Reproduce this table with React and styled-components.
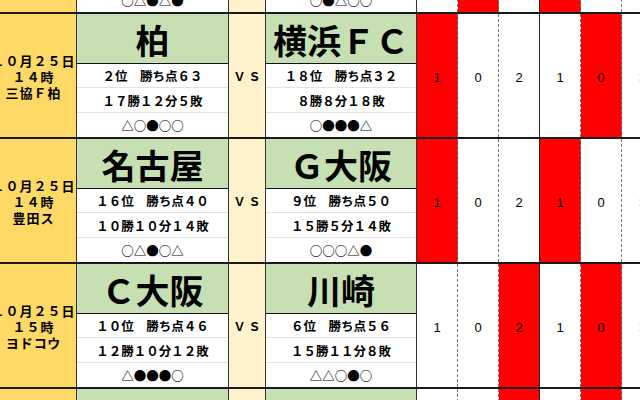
import React from 'react';
import styled, { createGlobalStyle } from 'styled-components';

//////////////////////////////////////////////////

const matches = [
  {
    date: ['', '', ''],
    home: { name: '', rank: '', record: '', form: '○△●△●' },
    away: { name: '', rank: '', record: '', form: '○●△○○' },
    results: [
      { v: '', red: false },
      { v: '', red: true },
      { v: '', red: false },
      { v: '', red: true },
      { v: '', red: false },
      { v: '', red: false },
    ],
  },
  {
    date: ['１０月２５日', '１４時', '三協Ｆ柏'],
    home: { name: '柏', rank: '２位　勝ち点６３', record: '１７勝１２分５敗', form: '△○●○○' },
    away: { name: '横浜ＦＣ', rank: '１８位　勝ち点３２', record: '８勝８分１８敗', form: '○●●●△' },
    results: [
      { v: '1', red: true },
      { v: '0', red: false },
      { v: '2', red: false },
      { v: '1', red: false },
      { v: '0', red: true },
      { v: '3', red: false, faint: true },
    ],
  },
  {
    date: ['１０月２５日', '１４時', '豊田ス'],
    home: { name: '名古屋', rank: '１６位　勝ち点４０', record: '１０勝１０分１４敗', form: '○△●○△' },
    away: { name: 'Ｇ大阪', rank: '９位　勝ち点５０', record: '１５勝５分１４敗', form: '○○○△●' },
    results: [
      { v: '1', red: true },
      { v: '0', red: false },
      { v: '2', red: false },
      { v: '1', red: true },
      { v: '0', red: false },
      { v: '3', red: false, faint: true },
    ],
  },
  {
    date: ['１０月２５日', '１５時', 'ヨドコウ'],
    home: { name: 'Ｃ大阪', rank: '１０位　勝ち点４６', record: '１２勝１０分１２敗', form: '△●●●○' },
    away: { name: '川崎', rank: '６位　勝ち点５６', record: '１５勝１１分８敗', form: '△△○●○' },
    results: [
      { v: '1', red: false },
      { v: '0', red: false },
      { v: '2', red: true },
      { v: '1', red: false },
      { v: '0', red: true },
      { v: '3', red: false, faint: true },
    ],
  },
  {
    date: ['', '', ''],
    home: { name: '', rank: '', record: '', form: '' },
    away: { name: '', rank: '', record: '', form: '' },
    results: [
      { v: '', red: false },
      { v: '', red: false },
      { v: '', red: true },
      { v: '', red: false },
      { v: '', red: true },
      { v: '', red: false },
    ],
  },
];

//////////////////////////////////////////////////

const TeamColumn = ({ team, width }) => (
  <Team $width={width}>
    <TeamName>{team.name}</TeamName>
    <InfoRow $h={24}>{team.rank}</InfoRow>
    <InfoRow $h={25}>{team.record}</InfoRow>
    <InfoRow $h={24} $last>{team.form}</InfoRow>
  </Team>
);

const App = () => {
  return (
    <>
      <GlobalStyle />
      <Sheet>
        {matches.map((m, i) => (
          <Block key={i}>
            <DateCell>
              {m.date.map((line, j) => (
                <DateLine key={j}>{line}</DateLine>
              ))}
            </DateCell>
            <TeamColumn team={m.home} width={152} />
            <VsCell>{m.date[0] ? 'ＶＳ' : ''}</VsCell>
            <TeamColumn team={m.away} width={151} />
            {m.results.map((r, j) => (
              <ResultCell key={j} $red={r.red} $solid={j === 2} $faint={r.faint}>
                {r.v}
              </ResultCell>
            ))}
          </Block>
        ))}
      </Sheet>
    </>
  );
};

//////////////////////////////////////////////////

const GlobalStyle = createGlobalStyle`
  html, body {
    margin: 0;
    padding: 0;
    width: 640px;
    height: 400px;
    overflow: hidden;
    background: #fff;
  }
  body {
    font-family: "Noto Sans CJK JP", "Liberation Sans", sans-serif;
    color: #000;
  }
`;

const Sheet = styled.div`
  margin-top: -113px;
  margin-left: -12px;
  width: 700px;
`;

const Block = styled.div`
  display: flex;
  height: 125px;
  box-sizing: border-box;
  border-top: 2px solid #1a1a1a;
`;

const DateCell = styled.div`
  width: 89px;
  box-sizing: border-box;
  border-right: 1px solid #333;
  background: #ffd966;
  display: flex;
  flex-direction: column;
  align-items: center;
  justify-content: center;
  padding-left: 3px;
  padding-top: 2px;
`;

const DateLine = styled.div`
  height: 16px;
  display: flex;
  align-items: center;
  font-size: 13px;
  font-weight: 700;
  letter-spacing: 1px;
  white-space: nowrap;
`;

const Team = styled.div`
  width: ${p => p.$width}px;
  box-sizing: border-box;
  border-right: 1px solid #333;
  display: flex;
  flex-direction: column;
`;

const TeamName = styled.div`
  height: 50px;
  box-sizing: border-box;
  border-bottom: 1px solid #111;
  background: #c6e0b4;
  display: flex;
  align-items: center;
  justify-content: center;
  font-size: 34px;
  font-weight: 700;
  line-height: 1;
  padding-top: 2px;
`;

const InfoRow = styled.div`
  height: ${p => p.$h}px;
  box-sizing: border-box;
  border-bottom: ${p => (p.$last ? 'none' : '1px solid #e2e2e2')};
  background: #fff;
  display: flex;
  align-items: center;
  justify-content: center;
  font-size: 12.5px;
  font-weight: 700;
  white-space: nowrap;
`;

const VsCell = styled.div`
  width: 37px;
  box-sizing: border-box;
  border-right: 1px solid #333;
  background: #fff2cc;
  display: flex;
  align-items: center;
  justify-content: center;
  font-size: 12px;
  font-weight: 700;
  letter-spacing: 3px;
  padding-left: 3px;
`;

const ResultCell = styled.div`
  width: 41px;
  flex-shrink: 0;
  box-sizing: border-box;
  border-right: 1px ${p => (p.$solid ? 'solid #222' : 'dashed #777')};
  background: ${p => (p.$red ? '#ff0000' : '#fff')};
  display: flex;
  align-items: center;
  justify-content: center;
  padding-top: 4px;
  font-family: "Liberation Sans", Arial, sans-serif;
  font-size: 13px;
  color: ${p => (p.$faint ? '#f0d9a8' : '#000')};
`;

//////////////////////////////////////////////////

export default App;
